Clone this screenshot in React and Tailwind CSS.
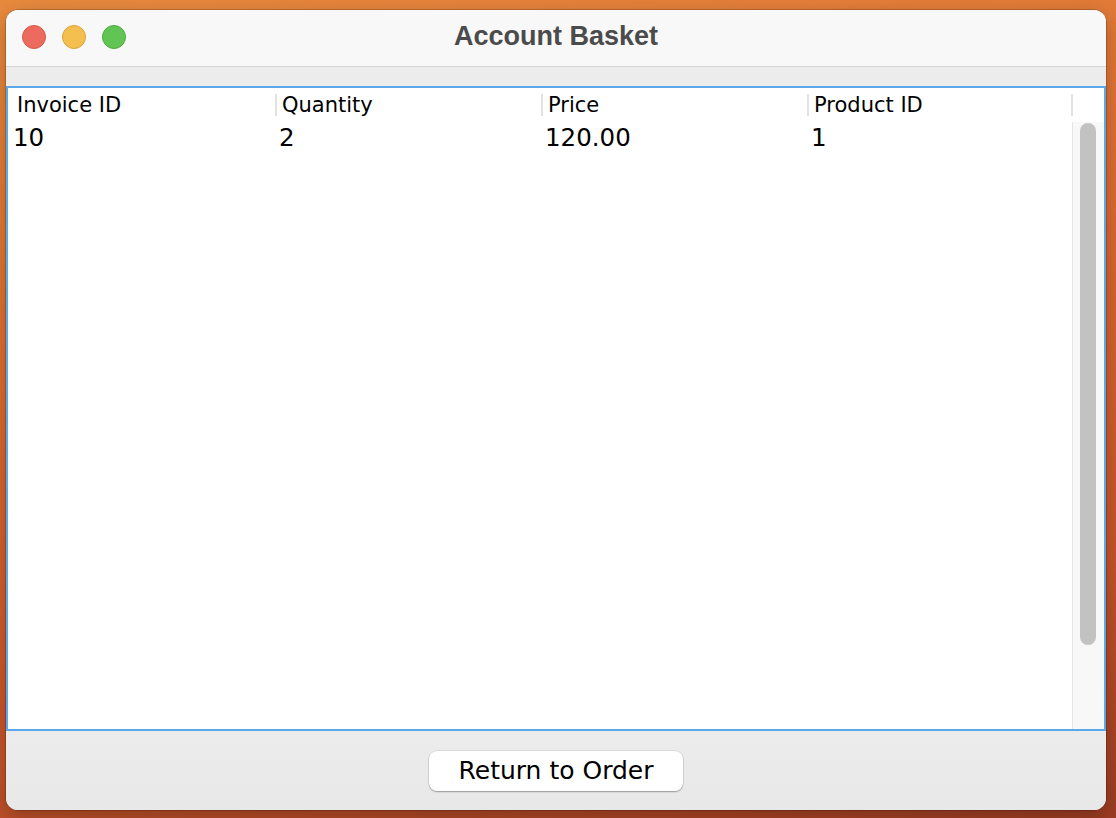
export default function App() {
  const headers = ["Invoice ID", "Quantity", "Price", "Product ID"];
  const row = ["10", "2", "120.00", "1"];
  const widths = ["w-[267px]", "w-[266px]", "w-[266px]", "w-[264px]"];
  return (
    <div className="w-[1116px] h-[818px] overflow-hidden bg-[linear-gradient(170deg,#e88a3e_0%,#db6a30_40%,#c4542a_75%,#9c3c22_100%)] pt-[10px] pl-[6px]">
      <div className="w-[1100px] h-[800px] rounded-[12px] overflow-hidden flex flex-col bg-[#ececec] shadow-[0_0_0_0.5px_rgba(0,0,0,0.35),0_6px_20px_rgba(0,0,0,0.25)]">
        {/* title bar */}
        <div className="h-[57px] shrink-0 bg-[#f8f8f8] border-b border-[#d6d6d6] grid grid-cols-[1fr_auto_1fr] items-center">
          <div className="flex items-center gap-[16px] pl-[16px] pb-[2px]">
            <div className="w-[24px] h-[24px] rounded-full bg-[#ed6a5e] border border-[#d65849]" />
            <div className="w-[24px] h-[24px] rounded-full bg-[#f5bf4f] border border-[#d9a33a]" />
            <div className="w-[24px] h-[24px] rounded-full bg-[#61c554] border border-[#4eaa3e]" />
          </div>
          <div className="text-[27px] font-bold text-[#4b4b4b] font-['Liberation_Sans',Arial,sans-serif] leading-none pb-[3px]">
            Account Basket
          </div>
          <div />
        </div>
        {/* gray band */}
        <div className="h-[19px] shrink-0 bg-[#ececec]" />
        {/* table */}
        <div className="h-[645px] shrink-0 border-2 border-[#5ba8ea] bg-white flex flex-col font-['DejaVu_Sans',sans-serif] text-black">
          <div className="h-[34px] shrink-0 flex items-center">
            {headers.map((h, i) => (
              <div key={h} className={`${widths[i]} h-full flex items-center`}>
                {i > 0 ? <div className="w-[2px] h-[22px] bg-[#e2e2e2]" /> : null}
                <span className={`text-[21px] leading-none ${i === 0 ? "pl-[9px]" : "pl-[5px]"}`}>{h}</span>
              </div>
            ))}
            <div className="flex-1 h-full flex items-center">
              <div className="w-[2px] h-[22px] bg-[#e2e2e2]" />
            </div>
          </div>
          <div className="flex-1 flex min-h-0">
            <div className="flex-1">
              <div className="h-[32px] flex items-center">
                {row.map((c, i) => (
                  <div key={i} className={`${widths[i]} text-[24.5px] leading-none ${i === 0 ? "pl-[5px]" : "pl-[4px]"}`}>
                    {c}
                  </div>
                ))}
              </div>
            </div>
            <div className="w-[32px] shrink-0 bg-[#f8f8f8] border-l border-[#e6e6e6] pl-[7px] pt-[1px]">
              <div className="w-[16px] h-[522px] rounded-full bg-[#c2c2c2]" />
            </div>
          </div>
        </div>
        {/* bottom */}
        <div className="flex-1 bg-[linear-gradient(#ececec,#e8e8e8)] flex items-center justify-center">
          <button className="w-[254px] h-[40px] bg-white rounded-[8px] shadow-[0_1px_1.5px_rgba(0,0,0,0.3),0_0_0_0.5px_rgba(0,0,0,0.12)] text-[25px] text-black font-['DejaVu_Sans',sans-serif] leading-none flex items-center justify-center">
            Return to Order
          </button>
        </div>
      </div>
    </div>
  );
}
